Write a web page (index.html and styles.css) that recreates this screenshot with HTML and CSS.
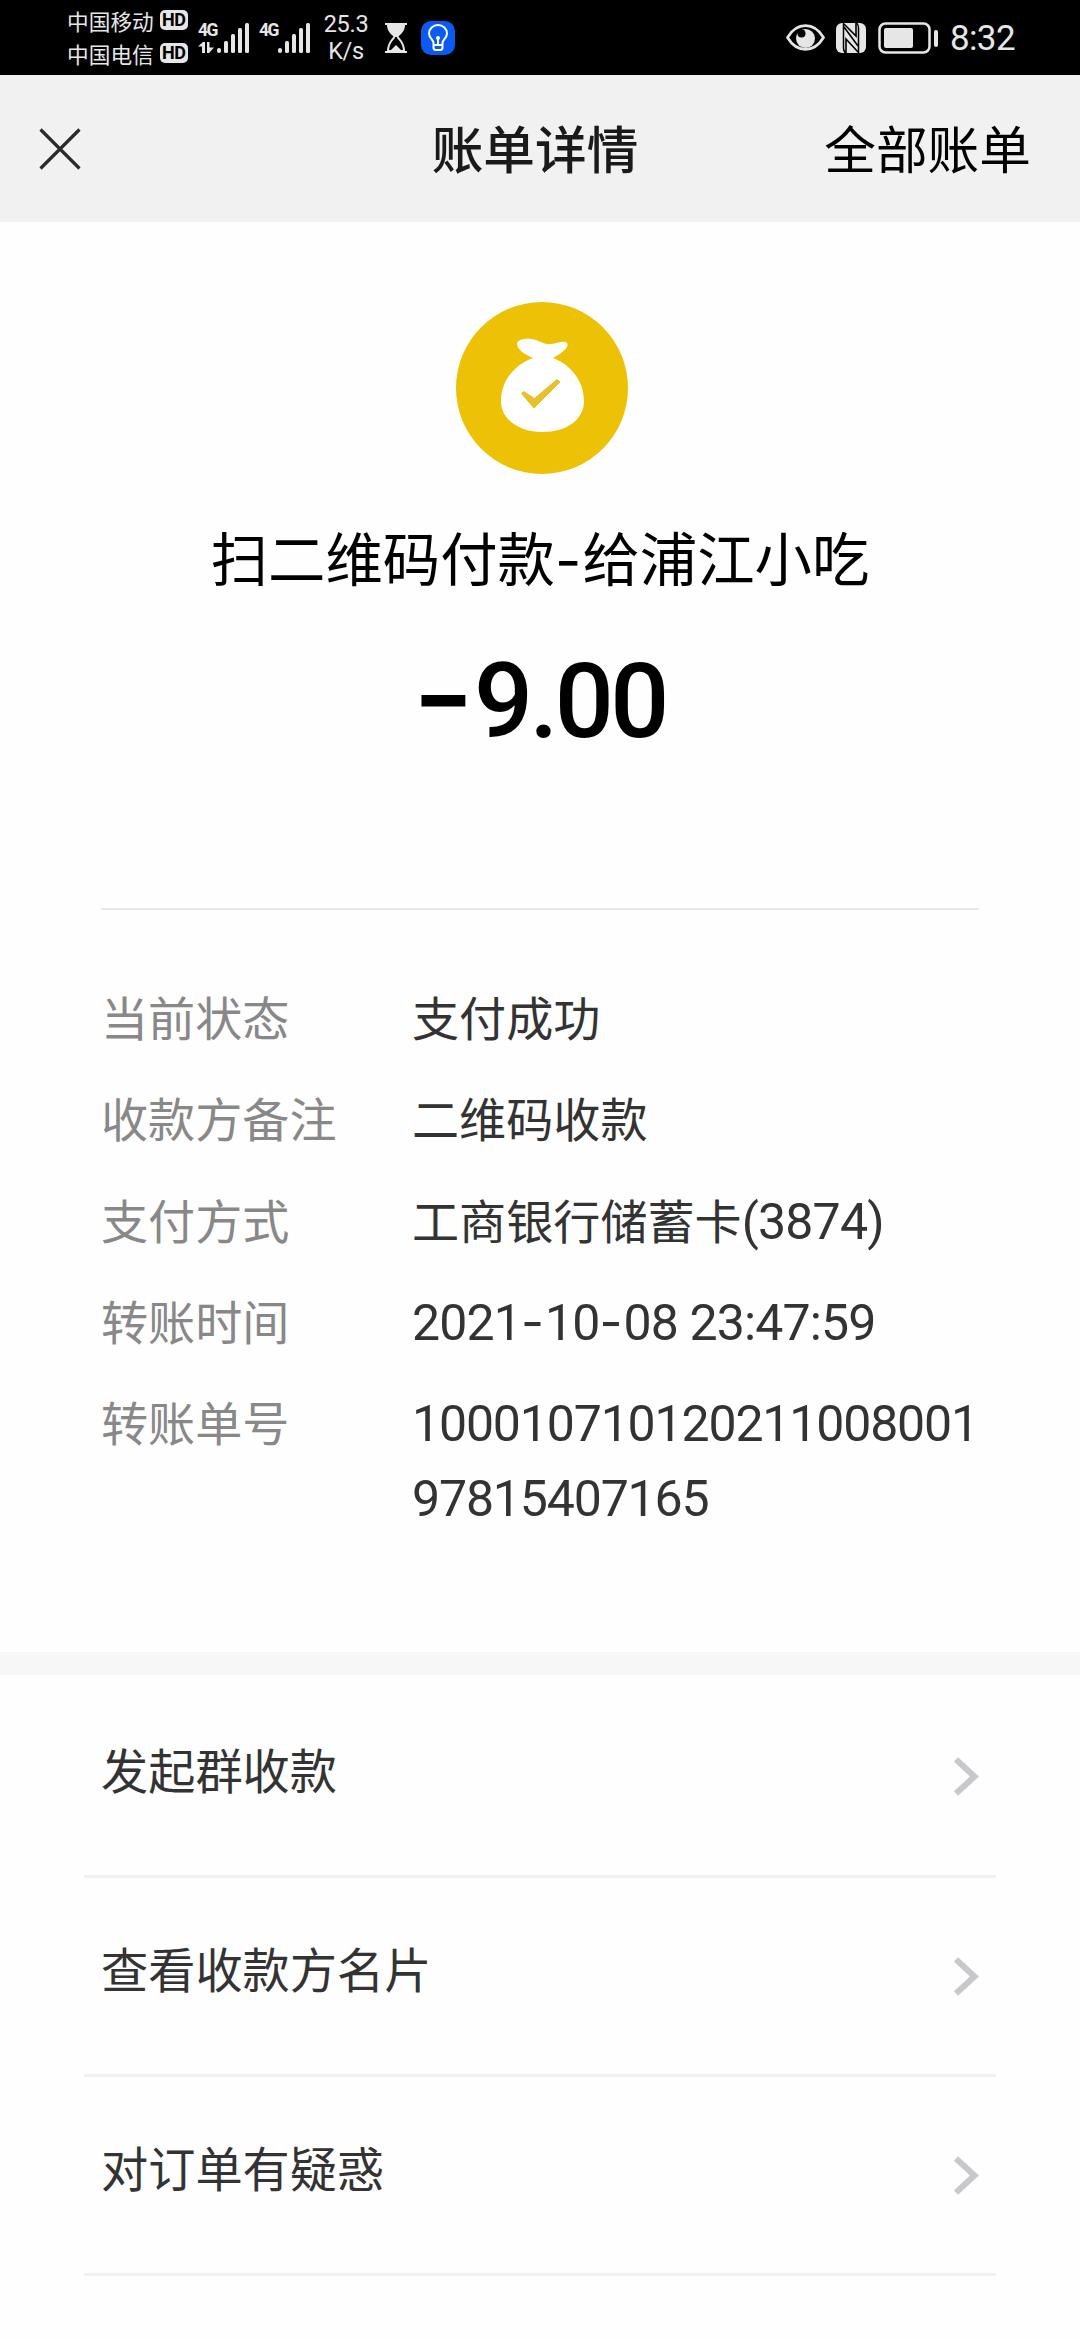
FILE: index.html
```html
<!DOCTYPE html>
<html lang="zh-CN">
<head>
  <meta charset="UTF-8">
  <meta name="viewport" content="width=device-width, initial-scale=1.0">
  <title>账单详情</title>
  <link rel="stylesheet" href="styles.css">
</head>
<body>
  <div class="status-bar">
    <div class="carriers">
      <div class="carrier">中国移动<span class="hd">HD</span></div>
      <div class="carrier">中国电信<span class="hd">HD</span></div>
    </div>
    <div class="signal">
      <div class="signal-type">
        <span class="net">4G</span>
        <svg width="17" height="11" viewBox="0 0 17 11" fill="#e6e6e6">
          <path d="M0 4.500 5 0h2v11H4V4.500zM9 0h2.500v5.500H16L11 11H9z"/>
        </svg>
      </div>
      <svg width="32" height="30" viewBox="0 0 32 30" fill="#e6e6e6">
        <rect x="0" y="25" width="4" height="5" rx="2"/>
        <rect x="7" y="18" width="4" height="12" rx="1.500"/>
        <rect x="14" y="11" width="4" height="19" rx="1.500"/>
        <rect x="21" y="5" width="4" height="25" rx="1.500"/>
        <rect x="28" y="0" width="4" height="30" rx="1.500"/>
      </svg>
    </div>
    <div class="signal">
      <div class="signal-type"><span class="net">4G</span></div>
      <svg width="32" height="30" viewBox="0 0 32 30" fill="#e6e6e6">
        <rect x="0" y="25" width="4" height="5" rx="2"/>
        <rect x="7" y="18" width="4" height="12" rx="1.500"/>
        <rect x="14" y="11" width="4" height="19" rx="1.500"/>
        <rect x="21" y="5" width="4" height="25" rx="1.500"/>
        <rect x="28" y="0" width="4" height="30" rx="1.500"/>
      </svg>
    </div>
    <div class="speed">25.3<br>K/s</div>
    <svg class="hourglass" width="24" height="30" viewBox="0 0 24 30">
      <path d="M1 1h22M1 29h22" stroke="#e6e6e6" stroke-width="2"/>
      <path d="M3 2h18c0 6-4 9-7 12h-4C7 11 3 8 3 2z" fill="#e6e6e6"/>
      <path d="M10.500 14C8 17 4 20 4 28h16c0-8-4-11-6.500-14" fill="none" stroke="#e6e6e6" stroke-width="2"/>
      <path d="M6 28l6-6 6 6z" fill="#e6e6e6"/>
    </svg>
    <svg class="bulb" width="34" height="34" viewBox="0 0 34 34">
      <rect width="34" height="34" rx="10" fill="#0b5bf3"/>
      <path d="M12.500 22c0-3-4.500-5-4.500-9.500a9 8.500 0 0 1 18 0c0 4.500-4.500 6.500-4.500 9.500v4.500q0 2.500-2.500 2.500h-4q-2.500 0-2.500-2.500zM12.500 24h9M17 24v-6" fill="none" stroke="#fff" stroke-width="2"/>
      <circle cx="17" cy="17" r="2" fill="#fff"/>
    </svg>
    <div class="status-right">
      <svg width="39" height="27" viewBox="0 0 39 27">
        <path d="M1.500 13.500C6 6 12 1.700 19.500 1.700S33 6 37.500 13.500C33 21 27 25.300 19.500 25.300S6 21 1.500 13.500z" fill="none" stroke="#e6e6e6" stroke-width="2.700"/>
        <circle cx="19.500" cy="14.500" r="9.500" fill="#e6e6e6"/>
        <circle cx="15.500" cy="9.500" r="4" fill="#000"/>
      </svg>
      <svg class="nfc" width="30" height="30" viewBox="0 0 30 30">
        <rect width="30" height="30" rx="6" fill="#e6e6e6"/>
        <path d="M7.500 0v25q0 3 2 5M22.500 30V5q0-3-2-5" fill="none" stroke="#000" stroke-width="1.500"/>
        <path d="M8 1l12 12V0M22 29L10 16v14M8 4l14 19" fill="none" stroke="#000" stroke-width="1.600"/>
      </svg>
      <svg class="battery" width="60" height="32" viewBox="0 0 60 32">
        <rect x="1.500" y="1.500" width="50" height="29" rx="6" fill="none" stroke="#e6e6e6" stroke-width="2.500"/>
        <rect x="6" y="6" width="29" height="20" rx="2" fill="#e6e6e6"/>
        <rect x="56" y="8" width="4" height="17" rx="2" fill="#e6e6e6"/>
      </svg>
      <span class="time">8:32</span>
    </div>
  </div>

  <div class="navbar">
    <svg class="close" width="42" height="42" viewBox="0 0 42 42">
      <path d="M1.500 1.500l39 39M40.500 1.500l-39 39" stroke="#2b2b2b" stroke-width="3.200"/>
    </svg>
    <h1>账单详情</h1>
    <a class="all-bills">全部账单</a>
  </div>

  <div class="summary">
    <svg class="money-bag" width="172" height="172" viewBox="0 0 172 172">
      <circle cx="86" cy="86" r="86" fill="#edc106"/>
      <path d="M61 42c0-5 9-6 15-5 7 1 12 6 19 5 6-1 13-4 16-1 3 4-6 11-14 15 18 7 31 23 31 43 0 19-18 31-41 31s-42-12-42-31c0-20 13-36 32-43-9-4-16-9-16-14z" fill="#fff"/>
      <path d="M65.500 91.500l2-2 11 7L101 77.500l3 2.500-26 26z" fill="#e7c02a" stroke="#e7c02a" stroke-width="1" stroke-linejoin="round"/>
    </svg>
    <div class="payee">扫二维码付款<span class="dash">-</span>给浦江小吃</div>
    <div class="amount"><span class="minus">−</span>9.00</div>
  </div>

  <div class="details">
    <div class="row">
      <div class="label">当前状态</div>
      <div class="value">支付成功</div>
    </div>
    <div class="row">
      <div class="label">收款方备注</div>
      <div class="value">二维码收款</div>
    </div>
    <div class="row">
      <div class="label">支付方式</div>
      <div class="value">工商银行储蓄卡<span class="num paren">(3874)</span></div>
    </div>
    <div class="row">
      <div class="label">转账时间</div>
      <div class="value num date">2021<span class="dash">-</span>10<span class="dash">-</span>08 23:47:59</div>
    </div>
    <div class="row">
      <div class="label">转账单号</div>
      <div class="value num">100010710120211008001<br>97815407165</div>
    </div>
  </div>

  <div class="menu">
    <div class="menu-item">
      <span>发起群收款</span>
      <svg width="26" height="39" viewBox="0 0 26 39"><path d="M3 2.500l18.500 17L3 36.500" fill="none" stroke="#c7c7cc" stroke-width="6"/></svg>
    </div>
    <div class="menu-item">
      <span>查看收款方名片</span>
      <svg width="26" height="39" viewBox="0 0 26 39"><path d="M3 2.500l18.500 17L3 36.500" fill="none" stroke="#c7c7cc" stroke-width="6"/></svg>
    </div>
    <div class="menu-item">
      <span>对订单有疑惑</span>
      <svg width="26" height="39" viewBox="0 0 26 39"><path d="M3 2.500l18.500 17L3 36.500" fill="none" stroke="#c7c7cc" stroke-width="6"/></svg>
    </div>
  </div>
</body>
</html>
```
FILE: styles.css
```css
* {
  box-sizing: border-box;
}
body {
  margin: 0;
  min-height: 2340px;
  background: #fefefe;
  color: #333;
  font-family: "Noto Sans CJK SC", sans-serif;
}
svg {
  display: block;
  flex: none;
}

/* 状态栏 */
.status-bar {
  display: flex;
  align-items: center;
  height: 75px;
  padding: 0 65px 0 67px;
  background: #000;
  color: #e6e6e6;
}
.carriers {
  width: 131px;
  padding-bottom: 2px;
}
.carrier {
  display: flex;
  align-items: center;
  height: 33px;
  font-size: 21.7px;
  line-height: 33px;
  white-space: nowrap;
}
.hd {
  width: 28px;
  height: 20px;
  margin-left: 6px;
  border-radius: 5px;
  background: #e6e6e6;
  color: #000;
  font: bold 18px/20px Roboto, sans-serif;
  text-align: center;
  letter-spacing: -0.5px;
}
.signal {
  display: flex;
  width: 61px;
}
.signal-type {
  width: 19px;
}
.net {
  display: block;
  height: 19px;
  font: bold 17.5px/15px Roboto, sans-serif;
  letter-spacing: -1.5px;
}
.speed {
  width: 56px;
  margin-left: -2px;
  font: 23.5px/27px Roboto, sans-serif;
  text-align: center;
  letter-spacing: -0.3px;
}
.hourglass {
  margin-left: 10px;
}
.bulb {
  margin-left: 13px;
}
.status-right {
  display: flex;
  align-items: center;
  margin-left: auto;
}
.nfc {
  margin-left: 11px;
}
.battery {
  margin-left: 12px;
}
.time {
  margin-left: 12px;
  padding-top: 2px;
  font: 35px/38px Roboto, sans-serif;
  letter-spacing: -0.6px;
}

/* 导航栏 */
.navbar {
  display: grid;
  grid-template-columns: 1fr auto 1fr;
  align-items: center;
  height: 147px;
  padding: 0 49px 0 39px;
  background: #f1f1f1;
}
.navbar h1 {
  margin: 0;
  padding-bottom: 3px;
  color: #1a1a1a;
  font-size: 51.7px;
  font-weight: 500;
  line-height: 76px;
}
.all-bills {
  justify-self: end;
  padding-bottom: 3px;
  color: #000;
  font-size: 51.7px;
  line-height: 76px;
}

.summary {
  display: flex;
  flex-direction: column;
  align-items: center;
  height: 686px;
  padding-top: 80px;
  color: #000;
}
.money-bag {
  margin-left: 4px;
}
.payee {
  margin-top: 40px;
  font-size: 57.4px;
  line-height: 84px;
}
.dash {
  font-family: Inter, sans-serif;
  letter-spacing: 1px;
}
.amount {
  margin-top: 48px;
  font: 500 104px/104px Roboto, sans-serif;
  letter-spacing: -3.6px;
}
.minus {
  margin-right: 2px;
  font-weight: 700;
  letter-spacing: 0;
}

/* 账单明细 */
.details {
  display: flex;
  flex-direction: column;
  gap: 26px;
  height: 744px;
  margin: 0 101px;
  padding-top: 68px;
  border-top: 2px solid #e8e8e8;
}
.row {
  display: flex;
  height: 75.3px;
  font-size: 47.1px;
  line-height: 75.3px;
}
.label {
  width: 311px;
  color: #888;
}
.value {
  white-space: nowrap;
}
.num {
  font-family: Roboto, sans-serif;
  font-size: 50px;
  letter-spacing: -1.15px;
}
.value.num {
  padding-top: 4px;
}
.value.date {
  letter-spacing: -0.85px;
}
.num .dash {
  line-height: 1;
}
.paren {
  line-height: 1;
  letter-spacing: -0.8px;
}

.menu {
  padding: 0 84px;
  border-top: 23px solid #f7f7f7;
}
.menu-item {
  display: flex;
  align-items: center;
  justify-content: space-between;
  height: 199px;
  padding: 0 17px;
  border-bottom: 3px solid #f1f1f1;
  font-size: 47.2px;
  line-height: 70px;
}
.menu-item:first-child {
  height: 203px;
  padding-top: 3px;
}
.menu-item span {
  padding-bottom: 16px;
}
```
